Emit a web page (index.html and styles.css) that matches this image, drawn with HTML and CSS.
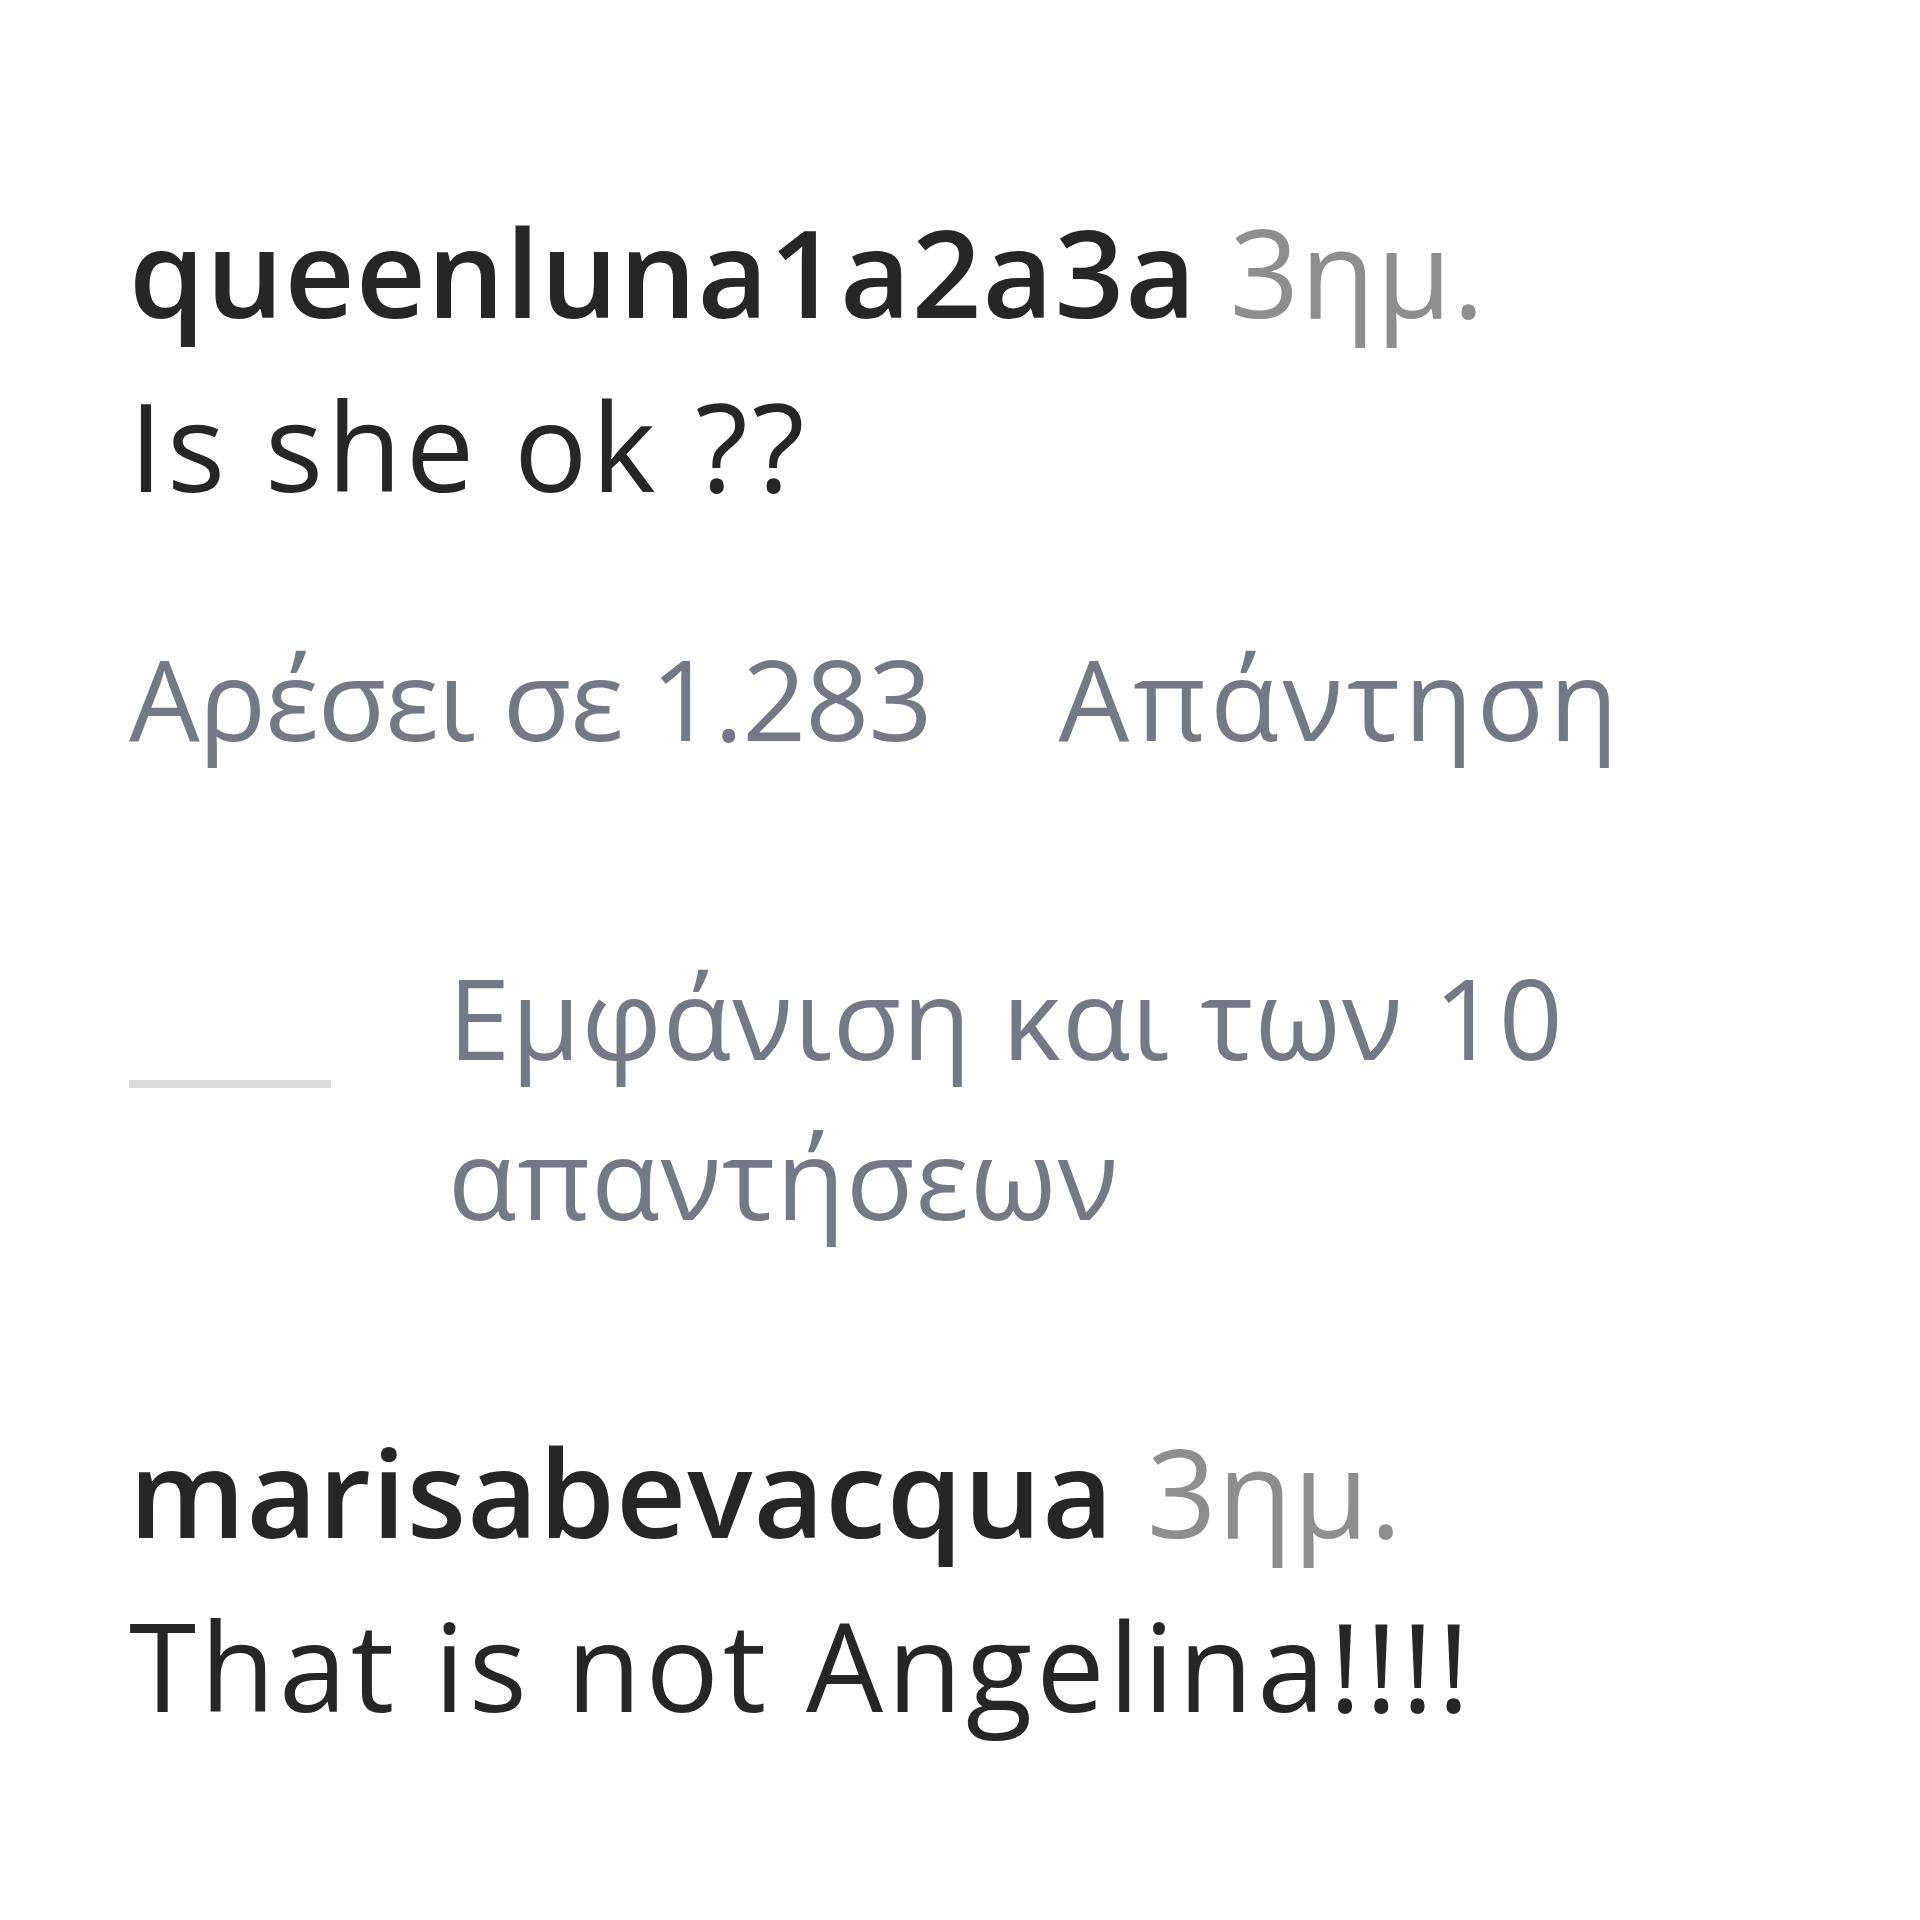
FILE: index.html
```html
<!DOCTYPE html>
<html lang="el">
<head>
    <meta charset="UTF-8">
    <meta name="viewport" content="width=device-width, initial-scale=1.0">
    <title>Σχόλια</title>
    <link rel="stylesheet" href="styles.css">
</head>
<body>
    <section class="comments">
        <div class="comment">
            <div class="meta"><span class="user">queenluna1a2a3a</span> <span class="time">3ημ.</span></div>
            <div class="text">Is she ok ??</div>
            <div class="actions">
                <span class="likes">Αρέσει σε 1.283</span>
                <span class="reply">Απάντηση</span>
            </div>
            <div class="replies">
                <span class="rule"></span>
                <span class="view">Εμφάνιση και των 10 απαντήσεων</span>
            </div>
        </div>
        <div class="comment">
            <div class="meta"><span class="user">marisabevacqua</span> <span class="time">3ημ.</span></div>
            <div class="text">That is not Angelina!!!!</div>
        </div>
    </section>
</body>
</html>
```
FILE: styles.css
```css
body { margin: 0; padding: 0; background: #ffffff; font-family: "Open Sans", "Noto Sans", sans-serif; }
.comments { padding: 185px 0 0 129px; }
.comment + .comment { margin-top: 148px; }
.meta { font-size: 122px; line-height: 172px; letter-spacing: 1px; white-space: nowrap; }
.user { color: #262626; font-weight: 600; }
.time { color: #8e8e8e; }
.text { font-size: 122px; line-height: 176px; letter-spacing: 4px; color: #262626; }
.actions { display: flex; gap: 127px; margin-top: 89px; font-size: 112px; line-height: 152px; color: #737a85; }
.likes { letter-spacing: -1px; }
.reply { letter-spacing: 4px; }
.replies { display: flex; align-items: flex-start; margin-top: 163px; }
.rule { width: 202px; height: 8px; margin-top: 143px; margin-right: 117px; background: #dbdbdb; flex: none; }
.view { width: 1150px; font-size: 112px; line-height: 160px; letter-spacing: 1px; color: #737a85; }
```
